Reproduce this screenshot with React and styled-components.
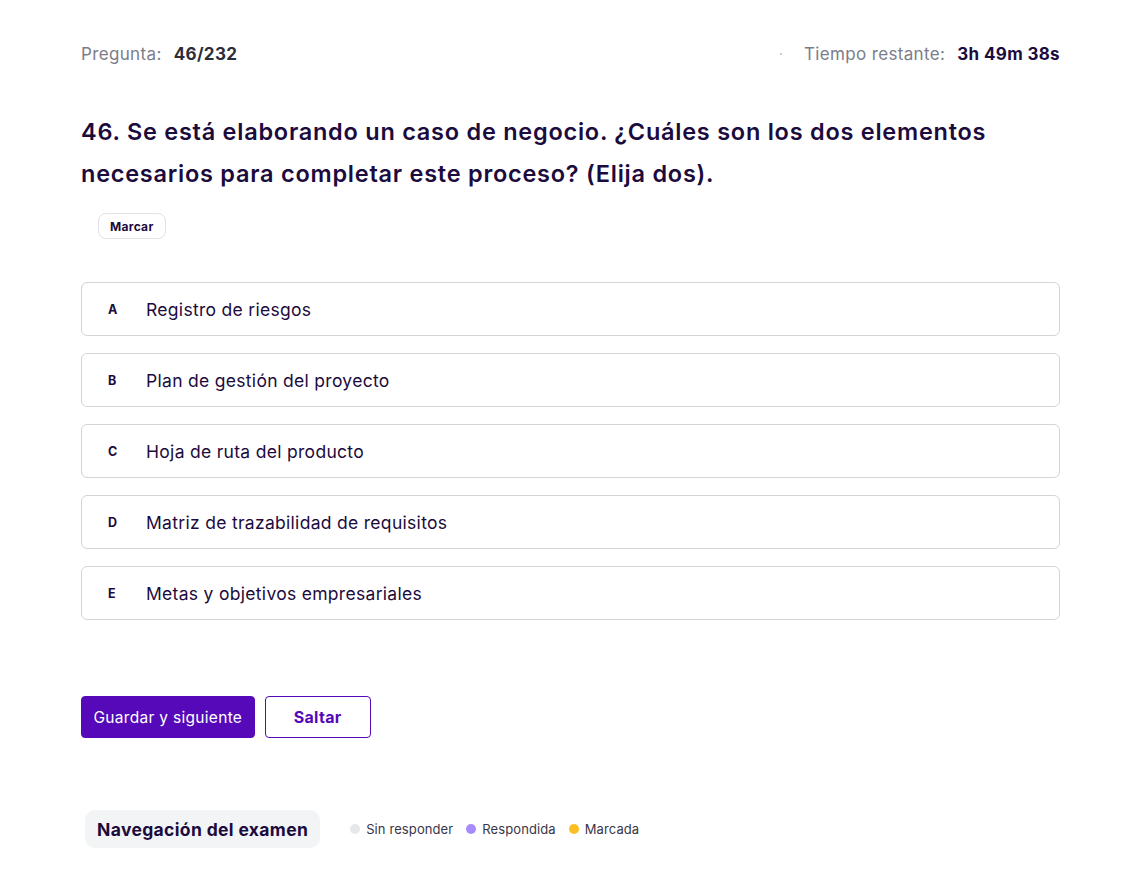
import React from 'react'
import styled, { createGlobalStyle } from 'styled-components'

const GlobalStyle = createGlobalStyle`
  * { box-sizing: border-box; }
  body {
    margin: 0;
    background: #ffffff;
    font-family: Inter, "Noto Sans", sans-serif;
    color: #1c0b3d;
  }
`

const Page = styled.main`
  width: 1129px;
  padding: 39px 69px 0 81px;
`

const TopBar = styled.header`
  display: flex;
  justify-content: space-between;
  align-items: center;
  height: 30px;
  font-size: 17px;
  letter-spacing: 0.35px;
`

const Meta = styled.div`
  display: flex;
  align-items: center;
  gap: 12px;
  color: #7b7d8a;
  b {
    font-weight: 700;
    color: ${({ $strong }) => $strong || '#2d2d3a'};
  }
`

const Dot = styled.span`
  width: 2px;
  height: 2px;
  border-radius: 50%;
  background: #b8b8c4;
  margin-right: 10px;
`

const Question = styled.h1`
  margin: 42px 0 0;
  font-size: 23.5px;
  line-height: 42px;
  font-weight: 600;
  color: #1c0b3d;
  letter-spacing: 0.75px;
`

const MarkButton = styled.button`
  margin: 18px 0 0 17px;
  height: 26px;
  padding: 0 11px;
  border: 1px solid #e2e2e8;
  border-radius: 8px;
  background: #fff;
  font-family: inherit;
  font-size: 12px;
  font-weight: 700;
  letter-spacing: 0.3px;
  color: #1c0b3d;
`

const Options = styled.ul`
  list-style: none;
  margin: 43px 0 0;
  padding: 0;
  display: flex;
  flex-direction: column;
  gap: 17px;
`

const Option = styled.li`
  display: flex;
  align-items: center;
  height: 54px;
  border: 1px solid #d4d4da;
  border-radius: 6px;
  padding-left: 26px;
  font-size: 17.5px;
  letter-spacing: 0.3px;
  color: #1c0b3d;
`

const Letter = styled.span`
  width: 38px;
  font-size: 12.5px;
  font-weight: 700;
  letter-spacing: 0;
`

const Actions = styled.div`
  display: flex;
  gap: 10px;
  margin-top: 76px;
`

const Button = styled.button`
  height: 42px;
  padding: 0 ${({ $primary }) => ($primary ? '11.5px' : '28px')};
  border-radius: 4px;
  font-family: inherit;
  font-size: ${({ $primary }) => ($primary ? '15.5px' : '16px')};
  font-weight: ${({ $primary }) => ($primary ? 400 : 700)};
  letter-spacing: 0.3px;
  border: 1px solid #5509b8;
  background: ${({ $primary }) => ($primary ? '#5509b8' : '#fff')};
  color: ${({ $primary }) => ($primary ? '#fff' : '#5509b8')};
`

const NavRow = styled.div`
  display: flex;
  align-items: center;
  gap: 30px;
  margin: 72px 0 0 4px;
`

const NavTitle = styled.div`
  height: 38px;
  display: flex;
  align-items: center;
  padding: 0 12px;
  background: #f3f4f6;
  border-radius: 10px;
  font-size: 17.5px;
  font-weight: 700;
  letter-spacing: 0.35px;
  color: #1c0b3d;
`

const Legend = styled.div`
  display: flex;
  align-items: center;
  gap: 13px;
  font-size: 13px;
  letter-spacing: 0.1px;
  color: #3a3548;
`

const LegendItem = styled.span`
  display: flex;
  align-items: center;
  gap: 6px;
  &::before {
    content: '';
    width: 10px;
    height: 10px;
    border-radius: 50%;
    background: ${({ $color }) => $color};
  }
`

const options = [
  ['A', 'Registro de riesgos'],
  ['B', 'Plan de gestión del proyecto'],
  ['C', 'Hoja de ruta del producto'],
  ['D', 'Matriz de trazabilidad de requisitos'],
  ['E', 'Metas y objetivos empresariales'],
]

export default function App() {
  return (
    <>
      <GlobalStyle />
      <Page>
        <TopBar>
          <Meta>
            Pregunta: <b>46/232</b>
          </Meta>
          <Meta $strong="#1c0b3d">
            <Dot />
            Tiempo restante: <b>3h 49m 38s</b>
          </Meta>
        </TopBar>

        <Question>
          46. Se está elaborando un caso de negocio. ¿Cuáles son los dos elementos necesarios para completar este proceso? (Elija dos).
        </Question>
        <MarkButton>Marcar</MarkButton>

        <Options>
          {options.map(([letter, text]) => (
            <Option key={letter}>
              <Letter>{letter}</Letter>
              {text}
            </Option>
          ))}
        </Options>

        <Actions>
          <Button $primary>Guardar y siguiente</Button>
          <Button>Saltar</Button>
        </Actions>

        <NavRow>
          <NavTitle>Navegación del examen</NavTitle>
          <Legend>
            <LegendItem $color="#e5e7eb">Sin responder</LegendItem>
            <LegendItem $color="#a78bfa">Respondida</LegendItem>
            <LegendItem $color="#fbbf24">Marcada</LegendItem>
          </Legend>
        </NavRow>
      </Page>
    </>
  )
}
